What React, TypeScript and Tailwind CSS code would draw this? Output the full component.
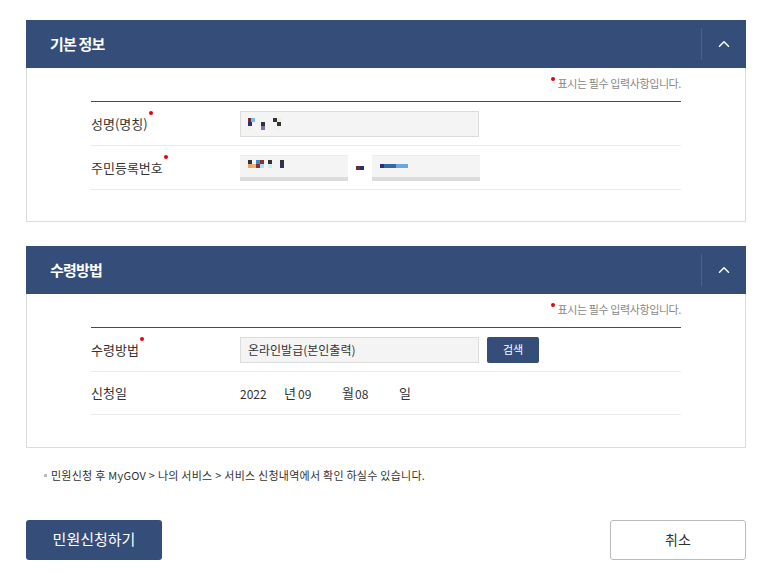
import { ChevronUp } from 'lucide-react';

const font = { fontFamily: '"Noto Sans CJK KR", "Noto Sans", sans-serif' };

function Pixels({ cells }: { cells: [number, number, string][] }) {
  // tiny mosaic blocks used to mask personal data
  return (
    <div className="relative h-[12px] w-[60px]">
      {cells.map(([x, y, c], i) => (
        <span
          key={i}
          className="absolute h-[4px] w-[4px]"
          style={{ left: x, top: y, background: c }}
        />
      ))}
    </div>
  );
}

function PanelHeader({ title }: { title: string }) {
  return (
    <div className="flex h-[48px] items-center bg-[#344d79]">
      <h2 className="flex-1 pl-[24px] text-[15px] font-bold tracking-[-0.8px] text-white">{title}</h2>
      <div className="h-[32px] w-px bg-[#4a618a]" />
      <button className="flex w-[44px] items-center justify-center text-white">
        <ChevronUp size={18} strokeWidth={2} />
      </button>
    </div>
  );
}

function RequiredNote() {
  return (
    <div className="flex justify-end pt-[8px] text-[11px] leading-[14px] tracking-[-0.4px] text-[#888]">
      <span className="relative pl-[7px]">
        <span className="absolute left-0 top-[1px] h-[4px] w-[4px] rounded-full bg-[#e60012]" />
        표시는 필수 입력사항입니다.
      </span>
    </div>
  );
}

function Label({ text, required }: { text: string; required?: boolean }) {
  return (
    <div className="w-[149px] shrink-0 text-[13px] text-[#333]">
      <span className="relative">
        {text}
        {required && (
          <span className="absolute right-[-5px] top-[-3px] h-[4px] w-[4px] rounded-full bg-[#e60012]" />
        )}
      </span>
    </div>
  );
}

export default function App() {
  return (
    <div className="min-h-screen bg-white pt-[20px]" style={font}>
      <div className="mx-[26px] w-[720px]">
        {/* 기본 정보 */}
        <section>
          <PanelHeader title="기본 정보" />
          <div className="border border-t-0 border-[#dcdcdc] px-[64px] pb-[31px]">
            <RequiredNote />
            <div className="mt-[11px] border-t border-[#344d79]">
              <div className="flex h-[44px] items-center border-b border-[#ebebeb]">
                <Label text="성명(명칭)" required />
                <div className="flex h-[26px] w-[239px] items-center border border-[#dcdcdc] bg-[#f4f4f4] pl-[7px]">
                  <Pixels
                    cells={[
                      [0, 0, '#6b3034'],
                      [3, 0, '#7cb8e8'],
                      [0, 4, '#2b2f6b'],
                      [0, 8, '#f2f5dc'],
                      [13, 4, '#333'],
                      [13, 8, '#8b6bb0'],
                      [25, 0, '#333'],
                      [29, 0, '#e5f2d8'],
                      [29, 4, '#333'],
                      [29, 8, '#eef5e0'],
                    ]}
                  />
                </div>
              </div>
              <div className="flex h-[44px] items-center border-b border-[#ebebeb]">
                <Label text="주민등록번호" required />
                <div className="flex h-[26px] w-[108px] items-center border-b-[4px] border-t border-[#dcdcdc] border-t-[#ebebeb] bg-[#f4f4f4] pl-[8px]">
                  <Pixels
                    cells={[
                      [0, 0, '#333'],
                      [0, 4, '#e3a86a'],
                      [4, 4, '#e8b37a'],
                      [8, 0, '#3a8ad0'],
                      [12, 0, '#8b2f34'],
                      [8, 4, '#8b2f34'],
                      [12, 4, '#a8e2f0'],
                      [16, 0, '#f4f4f4'],
                      [20, 0, '#333'],
                      [20, 4, '#c8f0f0'],
                      [32, 0, '#333'],
                      [32, 4, '#2b2f6b'],
                    ]}
                  />
                </div>
                <div className="flex w-[24px] justify-center">
                  <span className="flex h-[4px] w-[8px]">
                    <span className="h-full w-1/2 bg-[#6b3034]" />
                    <span className="h-full w-1/2 bg-[#2b2f6b]" />
                  </span>
                </div>
                <div className="flex h-[26px] w-[108px] items-center border-b-[4px] border-t border-[#dcdcdc] border-t-[#ebebeb] bg-[#f4f4f4] pl-[8px]">
                  <span className="flex h-[4px]">
                    <span className="w-[4px] bg-[#2b2f80]" />
                    <span className="w-[12px] bg-[#3568a8]" />
                    <span className="w-[12px] bg-[#6ca8e0]" />
                  </span>
                </div>
              </div>
            </div>
          </div>
        </section>

        {/* 수령방법 */}
        <section className="mt-[24px]">
          <PanelHeader title="수령방법" />
          <div className="border border-t-0 border-[#dcdcdc] px-[64px] pb-[32px]">
            <RequiredNote />
            <div className="mt-[11px] border-t border-[#344d79]">
              <div className="flex h-[44px] items-center border-b border-[#ebebeb]">
                <Label text="수령방법" required />
                <div className="flex h-[26px] w-[239px] items-center border border-[#dcdcdc] bg-[#f4f4f4] pl-[7px] text-[12px] text-[#333]">
                  온라인발급(본인출력)
                </div>
                <button className="ml-[8px] h-[26px] w-[52px] rounded-[2px] bg-[#344d79] text-[11px] text-white">
                  검색
                </button>
              </div>
              <div className="flex h-[43px] items-center border-b border-[#ebebeb]">
                <Label text="신청일" />
                <div className="flex items-center text-[12px] text-[#333]">
                  <span className="w-[44px] pt-[2px]">2022</span>
                  <span className="w-[14px] text-[13px]">년</span>
                  <span className="w-[44px] pt-[2px]">09</span>
                  <span className="w-[13px] text-[13px]">월</span>
                  <span className="w-[44px] pt-[2px]">08</span>
                  <span className="text-[13px]">일</span>
                </div>
              </div>
            </div>
          </div>
        </section>

        {/* 안내 */}
        <p className="mt-[19px] flex items-center pl-[18px] text-[11px] tracking-[0.25px] text-[#333]">
          <span className="mr-[4px] h-[3px] w-[3px] bg-[#bbb]" />
          민원신청 후 MyGOV &gt; 나의 서비스 &gt; 서비스 신청내역에서 확인 하실수 있습니다.
        </p>

        <div className="mt-[36px] flex justify-between">
          <button className="h-[40px] w-[136px] rounded-[3px] bg-[#344d79] text-[15px] text-white">
            민원신청하기
          </button>
          <button className="h-[40px] w-[136px] rounded-[3px] border border-[#bbb] bg-white text-[14px] text-[#333]">
            취소
          </button>
        </div>
      </div>
    </div>
  );
}
